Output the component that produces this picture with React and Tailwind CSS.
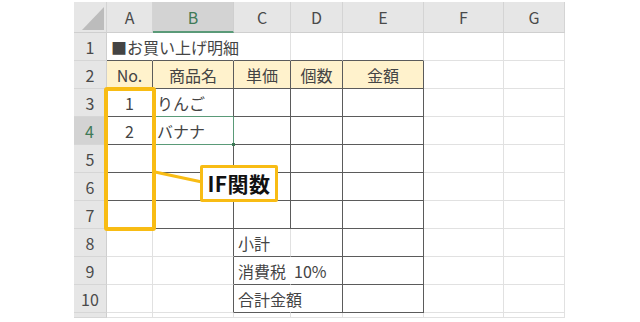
import React from 'react';

const COLS = ['A', 'B', 'C', 'D', 'E', 'F', 'G'];
const ROWS = [1, 2, 3, 4, 5, 6, 7, 8, 9, 10, 11];

const RIGHT = {
  none: 'border-r-transparent',
  light: 'border-r-[#e1e1e1]',
  dark: 'border-r-[#5b5b5b]',
  green: 'border-r-[#5a9a78]',
};

const BOTTOM = {
  none: 'border-b-transparent',
  light: 'border-b-[#e1e1e1]',
  dark: 'border-b-[#5b5b5b]',
  green: 'border-b-[#5a9a78]',
};

const CELLS = {
  '1-0': { text: '■お買い上げ明細' },
  '2-0': { text: 'No.', center: true },
  '2-1': { text: '商品名', center: true },
  '2-2': { text: '単価', center: true },
  '2-3': { text: '個数', center: true },
  '2-4': { text: '金額', center: true },
  '3-0': { text: '1', center: true },
  '3-1': { text: 'りんご' },
  '4-0': { text: '2', center: true },
  '4-1': { text: 'バナナ' },
  '8-2': { text: '小計' },
  '9-2': { text: '消費税\u200210%' },
  '10-2': { text: '合計金額' },
};

const rightOf = (r, c) => {
  if (r === 1 && (c === 0 || c === 1)) return 'none';
  if (r === 4 && c === 1) return 'green';
  if (r >= 2 && r <= 7 && c <= 4) return 'dark';
  if ((r === 9 || r === 10) && c === 2) return 'none';
  if (r >= 8 && r <= 10 && (c === 1 || c === 3 || c === 4)) return 'dark';
  return 'light';
};

const bottomOf = (r, c) => {
  if ((r === 3 || r === 4) && c === 1) return 'green';
  if (r >= 1 && r <= 7 && c <= 4) return 'dark';
  if (r >= 8 && r <= 10 && c >= 2 && c <= 4) return 'dark';
  return 'light';
};

const Corner = () => (
  <div className="flex items-end justify-end bg-[#e6e6e6] border-r border-b border-r-[#d4d4d4] border-b-[#cfcfcf] pr-[2px] pb-[2px]">
    <svg width="22" height="23" viewBox="0 0 22 23">
      <polygon points="22,0 22,23 0,23" fill="#bcbcbc" />
    </svg>
  </div>
);

const ColHeader = ({ label }) => {
  const selected = label === 'B';
  return (
    <div
      className={
        selected
          ? 'flex items-center justify-center bg-[#d3d3d3] text-[#3f7a57] border-r border-b-2 border-r-[#cfcfcf] border-b-[#5a9a78]'
          : 'flex items-center justify-center bg-[#e6e6e6] text-[#4a4a4a] border-r border-b border-r-[#d4d4d4] border-b-[#cfcfcf]'
      }
    >
      {label}
    </div>
  );
};

const RowHeader = ({ n }) => {
  const selected = n === 4;
  return (
    <div
      className={
        selected
          ? 'flex items-center justify-center bg-[#d3d3d3] text-[#3f7a57] border-r-2 border-b border-r-[#5a9a78] border-b-[#d6d6d6]'
          : 'flex items-center justify-center bg-[#e6e6e6] text-[#4a4a4a] border-r border-b border-r-[#cfcfcf] border-b-[#d6d6d6]'
      }
    >
      {n <= 10 ? n : ''}
    </div>
  );
};

const Cell = ({ r, c }) => {
  const data = CELLS[`${r}-${c}`];
  const yellow = r === 2 && c <= 4;
  return (
    <div
      className={[
        'relative flex items-center whitespace-pre border-r border-b text-[#444]',
        RIGHT[rightOf(r, c)],
        BOTTOM[bottomOf(r, c)],
        yellow ? 'bg-[#fff2cc]' : '',
        data && data.center ? 'justify-center' : 'pl-[4px]',
      ].join(' ')}
    >
      {data && <span className="relative z-10">{data.text}</span>}
      {r === 4 && c === 1 && (
        <span className="absolute right-[-2px] bottom-[-2px] w-[3px] h-[3px] bg-[#3f7a57] z-10" />
      )}
    </div>
  );
};

export default function App() {
  return (
    <div
      className="relative w-[640px] h-[322px] overflow-hidden bg-white pl-[74px] pt-[2px] text-[16px] leading-none"
      style={{ fontFamily: '"Noto Sans CJK JP", "Noto Sans", sans-serif' }}
    >
      <div className="grid grid-cols-[33px_46px_81px_57px_52px_81px_80px_61px] grid-rows-[31px_repeat(10,28px)_5px] w-[491px]">
        <Corner />
        {COLS.map((col) => (
          <ColHeader key={col} label={col} />
        ))}
        {ROWS.map((r) => (
          <React.Fragment key={r}>
            <RowHeader n={r} />
            {COLS.map((col, c) => (
              <Cell key={col} r={r} c={c} />
            ))}
          </React.Fragment>
        ))}
      </div>

      {/* IF関数 highlight */}
      <div className="absolute left-[104px] top-[87px] w-[52px] h-[144px] border-4 border-[#f8bc14] rounded-[3px]" />
      <svg className="absolute left-0 top-0" width="640" height="322">
        <line x1="155" y1="172" x2="202" y2="182" stroke="#f8bc14" strokeWidth="3" />
      </svg>
      <div className="absolute left-[200px] top-[165px] w-[78px] h-[37px] flex items-center justify-center bg-white border-[3px] border-[#f8bc14] rounded-[2px]">
        <span className="text-[21px] font-bold text-[#111] tracking-[0.5px]">IF関数</span>
      </div>
    </div>
  );
}
